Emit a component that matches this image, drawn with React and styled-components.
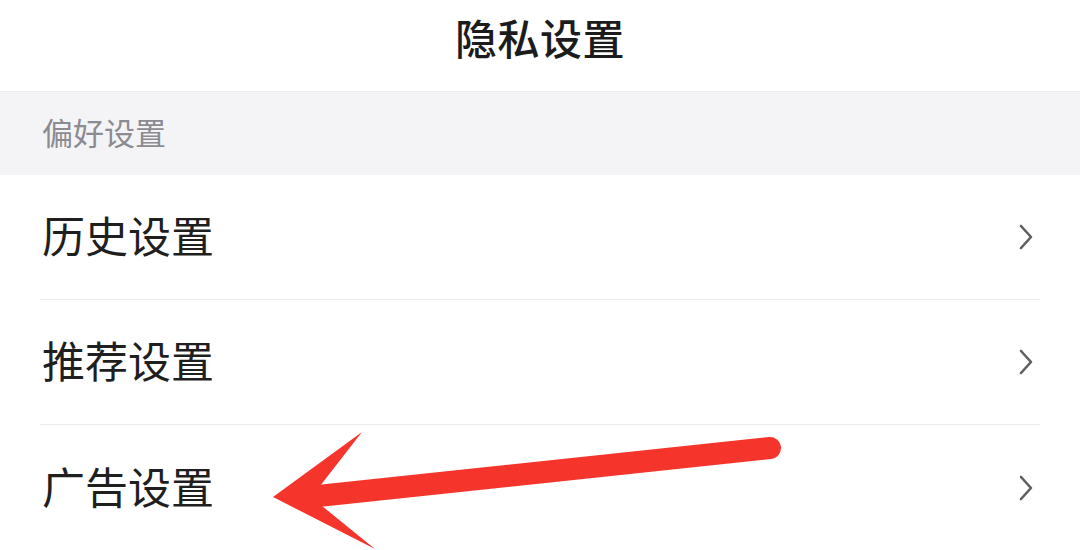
import React from 'react';
import styled, { createGlobalStyle } from 'styled-components';

const GlobalStyle = createGlobalStyle`
  html, body {
    margin: 0;
    padding: 0;
    background: #ffffff;
  }
  body {
    font-family: "Noto Sans CJK SC", "Noto Sans", sans-serif;
  }
`;

const Page = styled.div`
  position: relative;
  width: 1080px;
  height: 550px;
  overflow: hidden;
  background: #ffffff;
`;

const Header = styled.header`
  height: 92px;
  box-sizing: border-box;
  padding-bottom: 18px;
  display: flex;
  align-items: center;
  justify-content: center;
  border-bottom: 1px solid #ececec;
`;

const Title = styled.h1`
  margin: 0;
  font-size: 42px;
  font-weight: 500;
  color: #1c1c1c;
  letter-spacing: 0.5px;
`;

const SectionHeader = styled.div`
  height: 83px;
  box-sizing: border-box;
  padding: 0 0 4px 42px;
  display: flex;
  align-items: center;
  background: #f4f4f6;
  font-size: 31px;
  color: #8b8b91;
`;

const List = styled.div`
  display: flex;
  flex-direction: column;
`;

const Row = styled.div`
  height: 125px;
  margin: 0 40px;
  padding: 0 7px 6px 2px;
  box-sizing: border-box;
  display: flex;
  align-items: center;
  justify-content: space-between;
  border-bottom: ${(p) => (p.last ? 'none' : '1px solid #ebebeb')};
`;

const Label = styled.span`
  font-size: 43px;
  color: #1f1f1f;
`;

const ChevronBox = styled.span`
  display: flex;
  margin-top: 6px;
`;

const Arrow = styled.svg`
  position: absolute;
  left: 0;
  top: 0;
  pointer-events: none;
`;

const Chevron = () => (
  <ChevronBox>
    <svg width="14" height="26" viewBox="0 0 14 26">
      <polyline
        points="2,2 12,13 2,24"
        fill="none"
        stroke="#5f5f5f"
        strokeWidth="2.6"
        strokeLinecap="round"
        strokeLinejoin="round"
      />
    </svg>
  </ChevronBox>
);

const items = ['历史设置', '推荐设置', '广告设置'];

export default function App() {
  return (
    <>
      <GlobalStyle />
      <Page>
        <Header>
          <Title>隐私设置</Title>
        </Header>
        <SectionHeader>偏好设置</SectionHeader>
        <List>
          {items.map((label, i) => (
            <Row key={label} last={i === items.length - 1}>
              <Label>{label}</Label>
              <Chevron />
            </Row>
          ))}
        </List>
        {/* red annotation arrow drawn over the list */}
        <Arrow width="1080" height="550" viewBox="0 0 1080 550">
          <line
            x1="318"
            y1="496"
            x2="770"
            y2="448"
            stroke="#f5352c"
            strokeWidth="22"
            strokeLinecap="round"
          />
          <path d="M273 497 L362 432 L320 486 L322 506 L375 549 Z" fill="#f5352c" />
        </Arrow>
      </Page>
    </>
  );
}
